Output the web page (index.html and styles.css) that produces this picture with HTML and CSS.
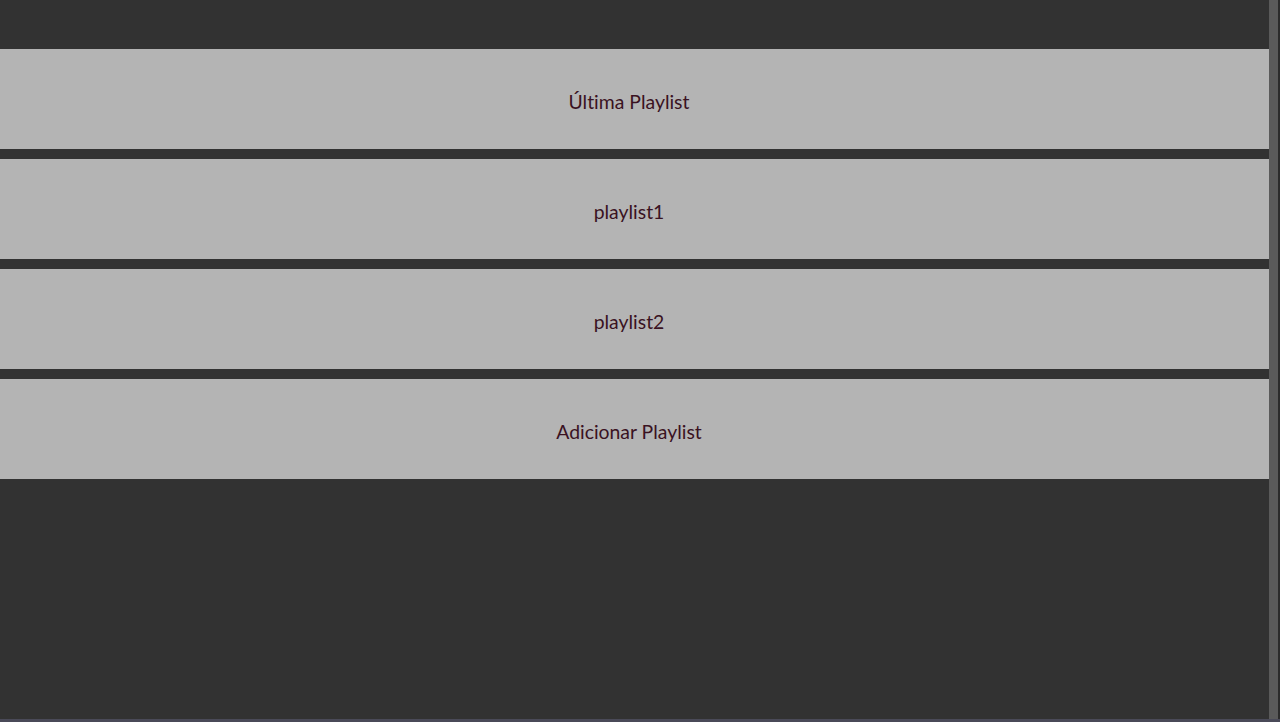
FILE: index.html
```html
<!DOCTYPE html>
<html lang="pt">
<head>
<meta charset="utf-8">
<title>Playlists</title>
<link rel="stylesheet" href="styles.css">
</head>
<body>
<div class="frame">
  <div class="app">
    <main class="content">
      <ul class="playlists">
        <li class="playlist"><span>Última Playlist</span></li>
        <li class="playlist"><span>playlist1</span></li>
        <li class="playlist"><span>playlist2</span></li>
        <li class="playlist"><span>Adicionar Playlist</span></li>
      </ul>
    </main>
    <div class="scrollbar"><div class="thumb"></div></div>
  </div>
  <div class="bottom-edge"></div>
</div>
</body>
</html>
```

FILE: styles.css
```css
html, body {
  margin: 0;
  padding: 0;
  height: 100%;
}
body {
  background: #323232;
  font-family: Lato, "Open Sans", sans-serif;
  overflow: hidden;
}
.frame {
  display: flex;
  flex-direction: column;
  height: 722px;
}
.app {
  flex: 1;
  display: flex;
  min-height: 0;
}
.content {
  flex: 1;
  padding-top: 49px;
}
.playlists {
  list-style: none;
  margin: 0;
  padding: 0;
  display: flex;
  flex-direction: column;
  gap: 10px;
}
.playlist {
  height: 100px;
  background: #b4b4b4;
  display: flex;
  align-items: center;
  justify-content: center;
  padding-right: 11px;
  padding-top: 5px;
  box-sizing: border-box;
  color: #3a1222;
  font-size: 19.4px;
  font-variant-ligatures: none;
}
.scrollbar {
  width: 11px;
  background: #2b2b2b;
  display: flex;
}
.thumb {
  width: 9px;
  background: #5a5a5a;
}
.bottom-edge {
  height: 3px;
  background: #4a4a58;
}
```
